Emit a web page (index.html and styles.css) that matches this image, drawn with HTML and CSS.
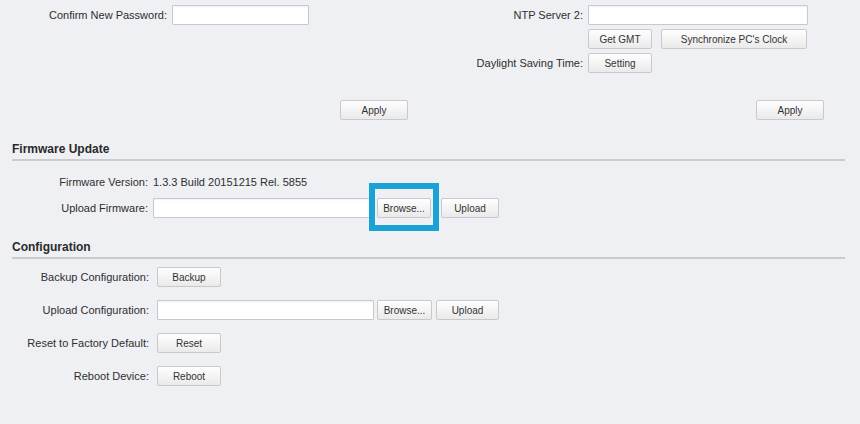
FILE: index.html
```html
<!DOCTYPE html>
<html>
<head>
<meta charset="utf-8">
<link rel="stylesheet" href="styles.css">
</head>
<body>
<div class="page">
  <div class="top-grid">
    <div class="lbl">Confirm New Password:</div>
    <div class="ctl"><input class="txt w-pass" type="text"></div>
    <div class="lbl">NTP Server 2:</div>
    <div class="ctl"><input class="txt w-ntp" type="text"></div>

    <div></div><div></div><div></div>
    <div class="ctl gap9"><button class="btn w64">Get GMT</button><button class="btn w146">Synchronize PC's Clock</button></div>

    <div></div><div></div>
    <div class="lbl">Daylight Saving Time:</div>
    <div class="ctl"><button class="btn w64">Setting</button></div>

    <div></div>
    <div class="ctl apply-cell"><button class="btn w68">Apply</button></div>
    <div></div>
    <div class="ctl apply-cell"><button class="btn w68">Apply</button></div>
  </div>

  <div class="section-title">Firmware Update</div>
  <div class="fw-rows">
    <div class="fw-row">
      <div class="lbl fw-lbl">Firmware Version:</div>
      <div class="val">1.3.3 Build 20151215 Rel. 5855</div>
    </div>
    <div class="fw-row">
      <div class="lbl fw-lbl">Upload Firmware:</div>
      <div class="ctl">
        <input class="txt w220" type="text">
        <span class="focus-wrap"><button class="btn w54">Browse...</button><span class="focus-ring"></span></span>
        <button class="btn w58 ml10">Upload</button>
      </div>
    </div>
  </div>

  <div class="section-title">Configuration</div>
  <div class="cfg-rows">
    <div class="cfg-row">
      <div class="lbl cfg-lbl">Backup Configuration:</div>
      <div class="ctl"><button class="btn w64">Backup</button></div>
    </div>
    <div class="cfg-row">
      <div class="lbl cfg-lbl">Upload Configuration:</div>
      <div class="ctl gap-cfg">
        <input class="txt w217" type="text">
        <button class="btn w55 ml3">Browse...</button>
        <button class="btn w63 ml4">Upload</button>
      </div>
    </div>
    <div class="cfg-row">
      <div class="lbl cfg-lbl">Reset to Factory Default:</div>
      <div class="ctl"><button class="btn w64">Reset</button></div>
    </div>
    <div class="cfg-row">
      <div class="lbl cfg-lbl">Reboot Device:</div>
      <div class="ctl"><button class="btn w64">Reboot</button></div>
    </div>
  </div>
</div>
</body>
</html>
```

FILE: styles.css
```css
html, body {
  margin: 0;
  padding: 0;
  background: #eff0f4;
}
body {
  font-family: "Liberation Sans", Arial, sans-serif;
  font-size: 11px;
  color: #2e2e2e;
  width: 860px;
  height: 424px;
  overflow: hidden;
}
.page {
  padding-top: 5px;
}
.top-grid {
  display: grid;
  grid-template-columns: 172px 244px 172px 1fr;
  grid-template-rows: 20px 20px 20px 43px;
  row-gap: 4px;
}
.lbl {
  text-align: right;
  padding-right: 5px;
  align-self: center;
  white-space: nowrap;
  line-height: 13px;
}
.ctl {
  display: flex;
  align-items: center;
}
.gap9 {
  gap: 9px;
}
.apply-cell {
  align-self: end;
  padding-left: 168px;
}
.txt {
  box-sizing: border-box;
  height: 20px;
  margin: 0;
  border: 1px solid #c6c9d2;
  border-radius: 1px;
  background: #fff;
  box-shadow: inset 0 1px 2px rgba(0, 0, 0, 0.06);
  padding: 0 3px;
  font: 11px "Liberation Sans", Arial, sans-serif;
}
.btn {
  box-sizing: border-box;
  height: 20px;
  margin: 0;
  padding: 0;
  border: 1px solid #c9c9cb;
  border-radius: 2px;
  background: linear-gradient(#fefefe, #eaeaea);
  font: 10px "Liberation Sans", Arial, sans-serif;
  color: #333;
  text-align: center;
}
.w-pass { width: 137px; }
.w-ntp { width: 220px; }
.w64 { width: 64px; }
.w146 { width: 146px; }
.w68 { width: 68px; }
.w220 { width: 220px; }
.w217 { width: 217px; }
.w54 { width: 54px; }
.w55 { width: 55px; }
.w58 { width: 58px; }
.w63 { width: 63px; }
.ml3 { margin-left: 3px; }
.ml4 { margin-left: 4px; }
.ml10 { margin-left: 10px; }

.section-title {
  margin: 22px 15px 0 12px;
  padding-bottom: 3px;
  border-bottom: 2px solid #cacbcf;
  font-size: 12px;
  font-weight: bold;
  line-height: 14px;
  color: #2a2a2a;
}
.fw-rows {
  margin-top: 11px;
  display: flex;
  flex-direction: column;
  gap: 6px;
}
.fw-row {
  display: flex;
  height: 20px;
  align-items: center;
}
.fw-lbl {
  width: 153px;
  box-sizing: border-box;
}
.val {
  line-height: 13px;
}
.focus-wrap {
  position: relative;
  display: inline-flex;
  margin-left: 4px;
}
.focus-ring {
  position: absolute;
  left: -8px;
  right: -8px;
  top: -15px;
  bottom: -13px;
  border: 6px solid #1aa2d7;
  pointer-events: none;
}
.cfg-rows {
  margin-top: 8px;
  display: flex;
  flex-direction: column;
  gap: 13px;
}
.cfg-row {
  display: flex;
  height: 20px;
  align-items: center;
}
.cfg-lbl {
  width: 157px;
  box-sizing: border-box;
  padding-right: 8px;
}
```
